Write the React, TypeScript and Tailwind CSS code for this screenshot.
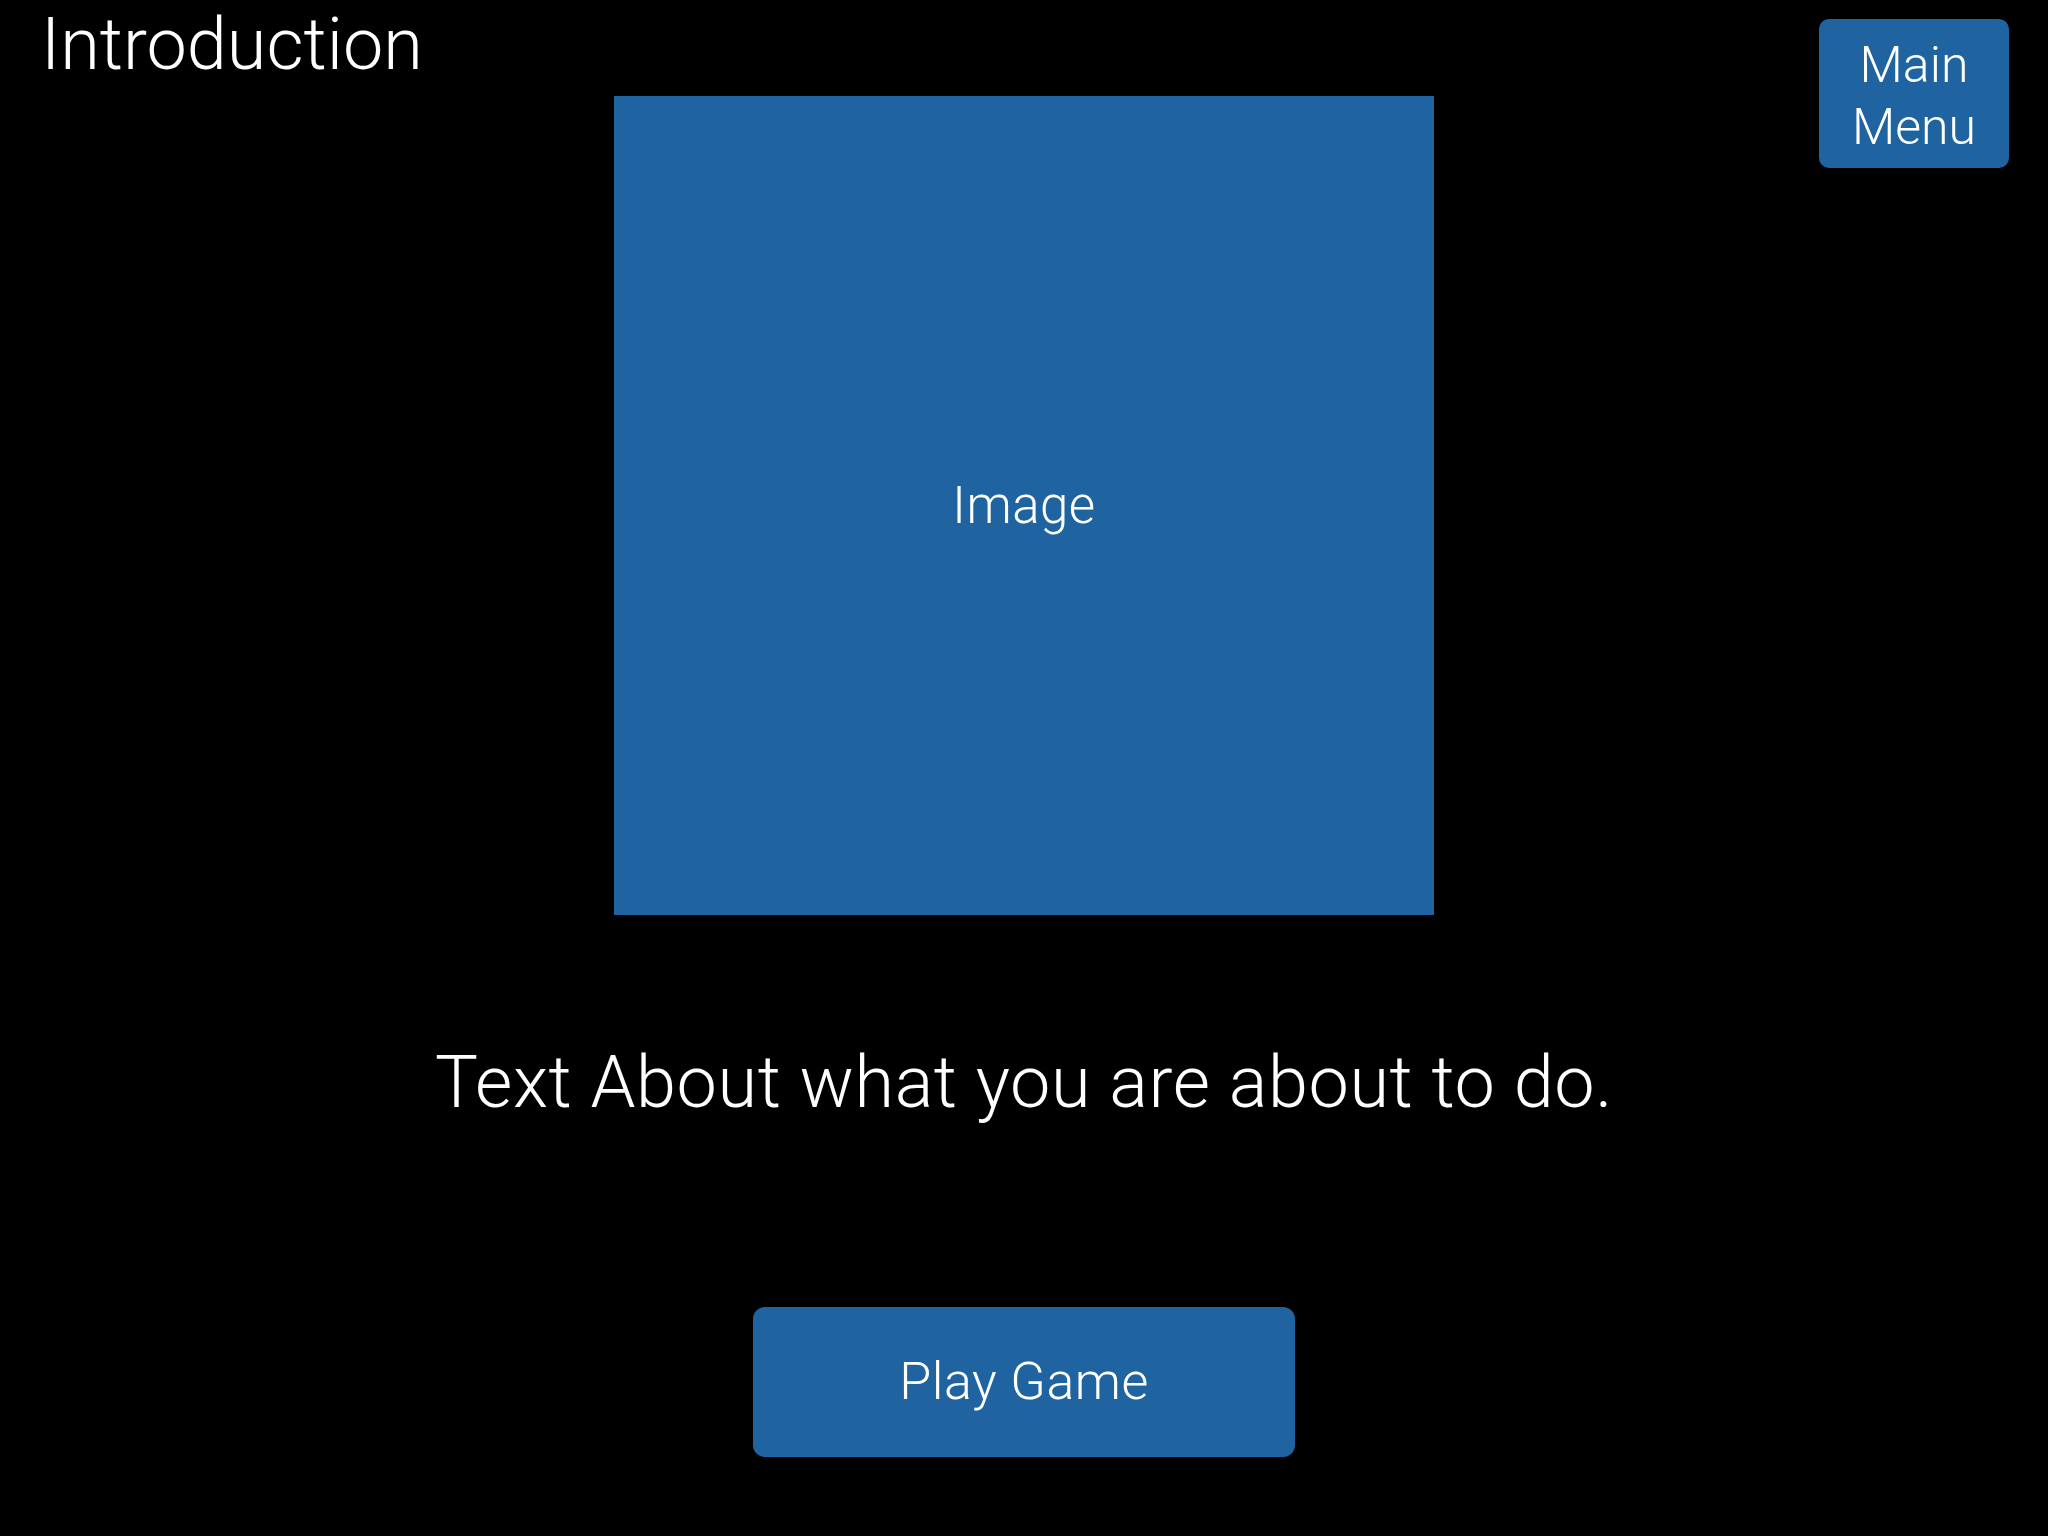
import React from 'react';

const font = { fontFamily: '"Helvetica Neue", Roboto, "Liberation Sans", sans-serif' };

const App: React.FC = () => {
  return (
    <div className="min-h-[1536px] w-full bg-black text-white font-light" style={font}>
      <div className="grid grid-cols-[1fr_820px_1fr]">
        <div className="pl-[41px] pt-[9px]">
          <h1 className="text-[72px] leading-none font-light">Introduction</h1>
        </div>
        <div className="pt-[96px]">
          <div className="w-[820px] h-[819px] bg-[#1f64a0] flex items-center justify-center">
            <span className="text-[51px] leading-none tracking-[0.5px]">Image</span>
          </div>
        </div>
        <div className="flex justify-end pt-[19px] pr-[39px]">
          <button className="w-[190px] h-[149px] bg-[#1f64a0] rounded-[10px] text-[50px] leading-[62px] text-white font-light pt-[4px]">
            Main
            <br />
            Menu
          </button>
        </div>
      </div>
      <p className="mt-[132px] text-center text-[72px] leading-none tracking-[0.6px]">
        Text About what you are about to do.
      </p>
      <div className="flex justify-center mt-[188px]">
        <button className="w-[542px] h-[150px] bg-[#1f64a0] rounded-[12px] text-[52px] leading-none tracking-[0.5px] text-white font-light">
          Play Game
        </button>
      </div>
    </div>
  );
};

export default App;
